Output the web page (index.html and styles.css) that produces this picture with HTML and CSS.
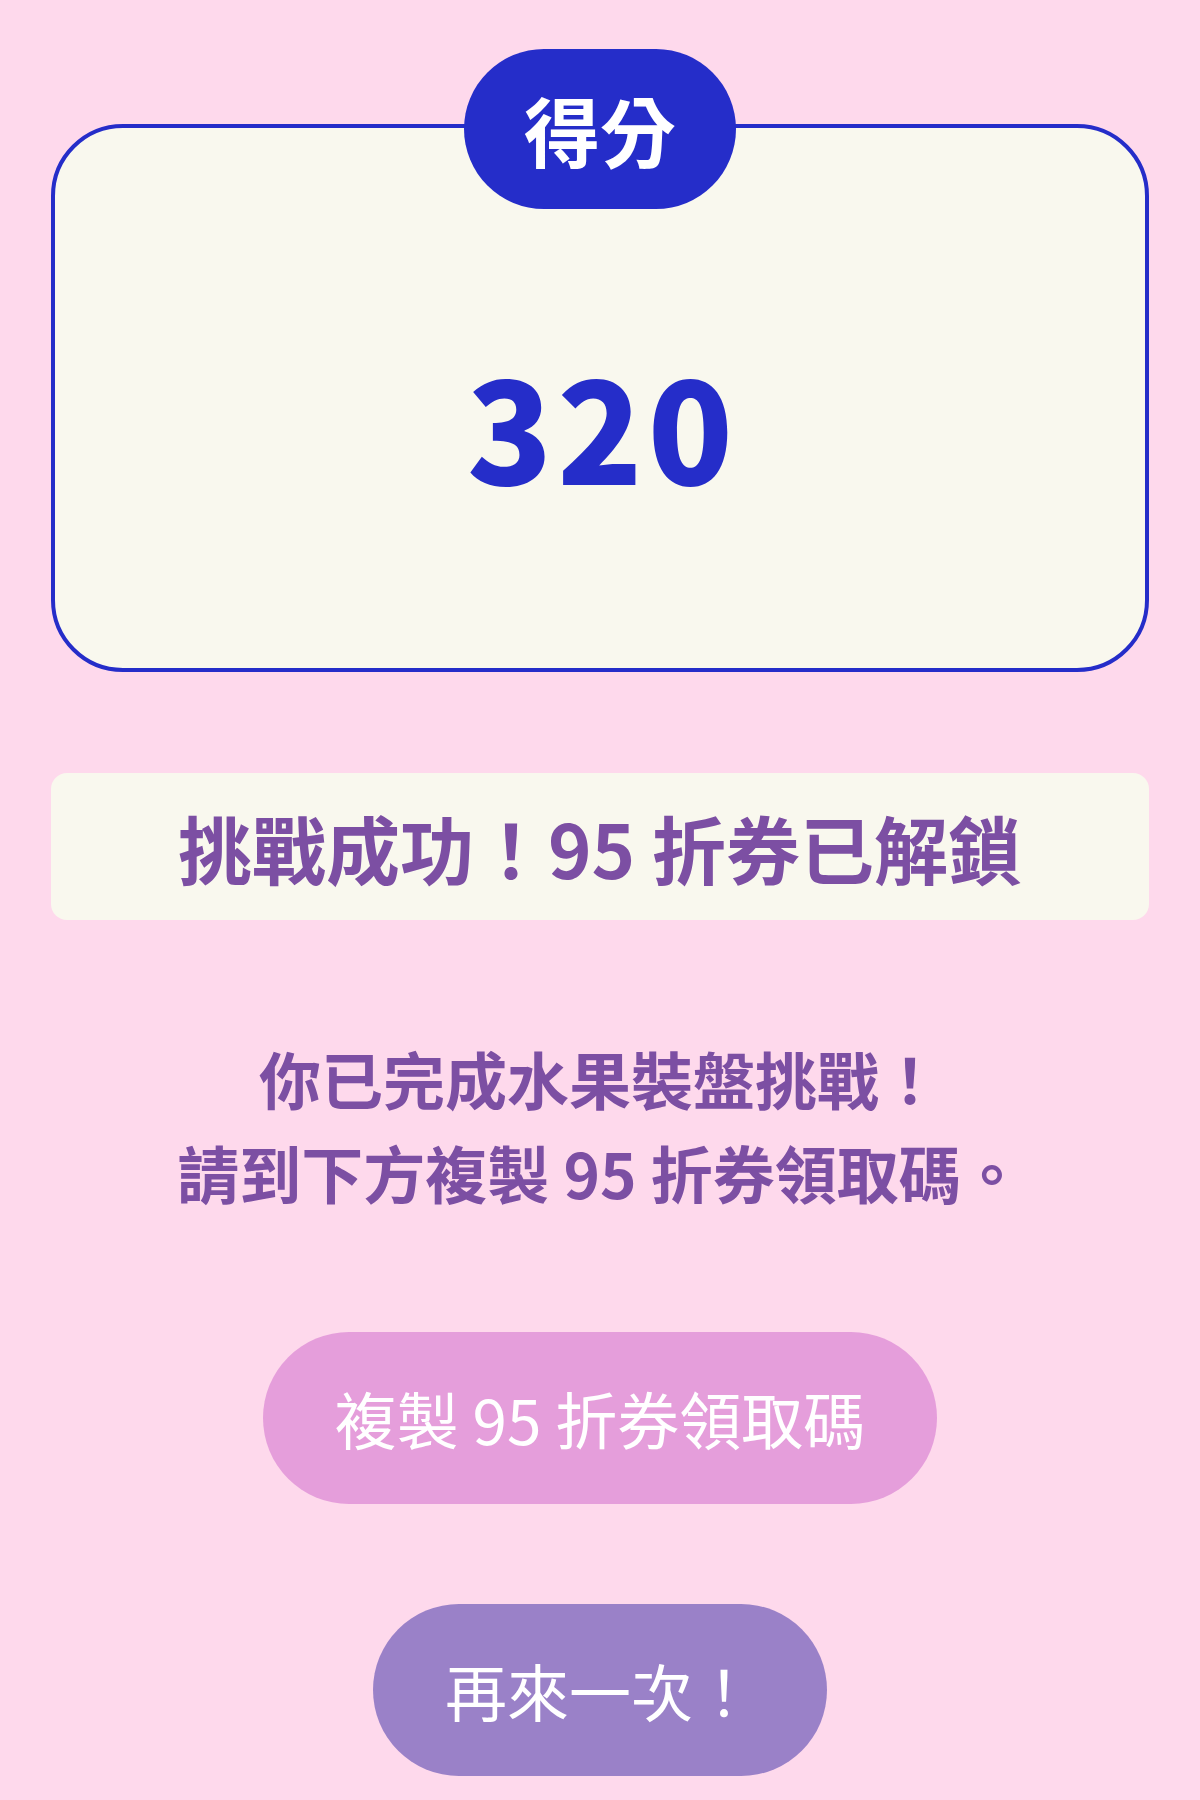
FILE: index.html
```html
<!DOCTYPE html>
<html lang="zh-Hant">
<head>
  <meta charset="UTF-8">
  <meta name="viewport" content="width=device-width, initial-scale=1.0">
  <title>水果裝盤挑戰 - 結果</title>
  <link rel="stylesheet" href="styles.css">
</head>
<body>
  <div class="page">
    <section class="score-card">
      <div class="score-label">得分</div>
      <div class="score-value">320</div>
    </section>

    <div class="unlock-banner">挑戰成功！95 折券已解鎖</div>

    <p class="message">
      你已完成水果裝盤挑戰！<br>
      請到下方複製 95 折券領取碼。
    </p>

    <div class="actions">
      <button type="button" class="btn btn-copy">複製 95 折券領取碼</button>
      <button type="button" class="btn btn-retry">再來一次！</button>
    </div>
  </div>
</body>
</html>
```

FILE: styles.css
```css
body {
  font-family: "Noto Sans CJK TC", "Noto Sans", sans-serif;
  background-color: #fed9ec;
  margin: 0;
  padding: 0;
}
.page {
  padding: 124px 51px 24px;
  display: flex;
  flex-direction: column;
}
.score-card {
  position: relative;
  box-sizing: border-box;
  height: 548px;
  padding-top: 52px;
  background: #f9f8ee;
  border: 4px solid #252dc9;
  border-radius: 72px;
  display: flex;
  align-items: center;
  justify-content: center;
}
.score-label {
  position: absolute;
  top: -79px;
  left: 50%;
  transform: translateX(-50%);
  box-sizing: border-box;
  width: 272px;
  height: 160px;
  border-radius: 999px;
  background: #252dc9;
  color: #ffffff;
  font-size: 76px;
  font-weight: 700;
  display: flex;
  align-items: center;
  justify-content: center;
}
.score-value {
  color: #252dc9;
  font-size: 140px;
  font-weight: 900;
  letter-spacing: 5px;
  margin-right: -5px;
  line-height: 1;
}
.unlock-banner {
  margin-top: 101px;
  padding: 20px 0;
  background: #f9f8ee;
  border-radius: 16px;
  color: #7c4fa3;
  font-size: 74px;
  font-weight: 700;
  line-height: 107px;
  text-align: center;
}
.message {
  margin: 111px 0 0;
  color: #7c4fa3;
  font-size: 62px;
  font-weight: 700;
  line-height: 94px;
  text-align: center;
}
.actions {
  margin-top: 113px;
  display: flex;
  flex-direction: column;
  align-items: center;
  gap: 100px;
}
.btn {
  font-family: "Noto Sans CJK TC", "Noto Sans", sans-serif;
  font-size: 62px;
  font-weight: 400;
  line-height: 92px;
  color: #ffffff;
  border: none;
  border-radius: 999px;
  padding: 40px 72px;
  cursor: pointer;
}
.btn-copy {
  background-color: #e59edb;
}
.btn-retry {
  background-color: #9a81c8;
}
```
